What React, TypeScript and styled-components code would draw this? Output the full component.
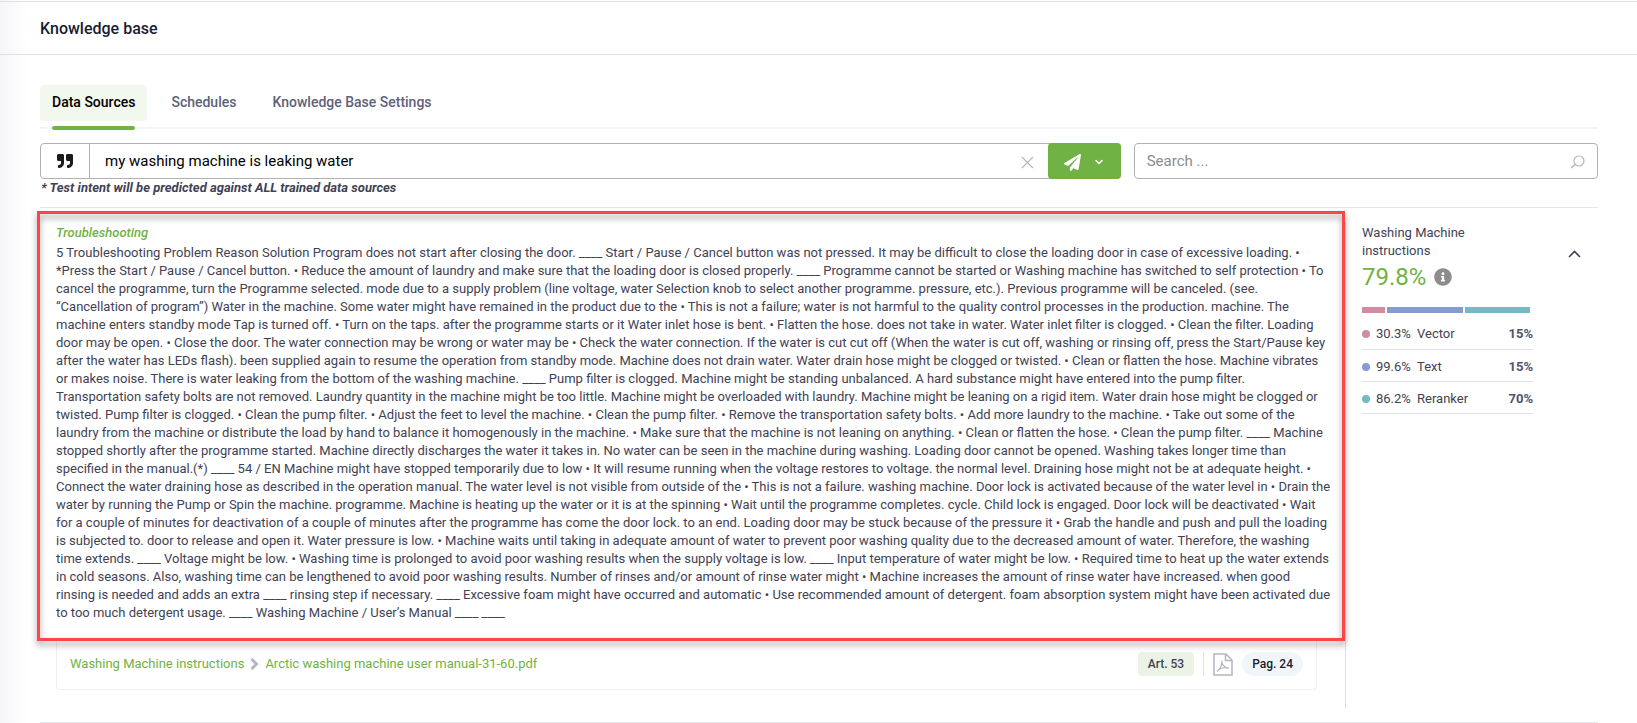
import React from "react";
import styled, { createGlobalStyle, css } from "styled-components";
import { FaQuoteRight, FaPaperPlane, FaInfoCircle } from "react-icons/fa";
import { FiChevronDown } from "react-icons/fi";

const Global = createGlobalStyle`
  *, *::before, *::after { box-sizing: border-box; }
  body {
    margin: 0;
    background: #fff;
    color: #3f4254;
    font: 400 13px/18px Roboto, "Liberation Sans", sans-serif;
  }
  button, input { font: inherit; color: inherit; }
  h1, h2, p, ul { margin: 0; padding: 0; }
`;

const Page = styled.div`
  min-height: 100vh;
  padding-top: 1px;
  background: linear-gradient(to right, #f6f6f9, #fff 28px);
`;

const Header = styled.header`
  display: flex;
  align-items: center;
  height: 54px;
  padding: 2px 40px 0;
  border-top: 1px solid #dde1ea;
  border-bottom: 1px solid #dde1ea;
`;

const Title = styled.h1`
  font-size: 16px;
  line-height: 24px;
  font-weight: 500;
  color: #181c32;
`;

const Main = styled.main`
  padding: 30px 39px 0 40px;
`;

const Tabs = styled.nav`
  display: flex;
  gap: 12px;
  margin-bottom: 14px;
  padding-bottom: 6px;
  border-bottom: 2px solid #f4f4f4;
`;

const Tab = styled.a<{ $active?: boolean }>`
  position: relative;
  padding: 7px 12px 9px;
  border-radius: 4px;
  font-size: 14px;
  line-height: 20px;
  font-weight: 500;
  color: #5e6278;
  text-decoration: none;
  ${(p) =>
    p.$active &&
    css`
      color: #000;
      background: #f3f8ef;
      &::after {
        content: "";
        position: absolute;
        left: 12px;
        right: 12px;
        bottom: -9px;
        height: 4px;
        border-radius: 2px;
        background: #70b244;
      }
    `}
`;

const Toolbar = styled.div`
  display: flex;
  gap: 13px;
`;

const Field = styled.div<{ $grow: number }>`
  display: flex;
  flex: ${(p) => p.$grow} 1 0;
  height: 36px;
  border: 1px solid #b1b1b1;
  border-radius: 4px;
`;

const QuoteLabel = styled.label`
  display: flex;
  align-items: center;
  justify-content: center;
  width: 49px;
  border-right: 1px solid #b1b1b1;
  color: #1c1c1c;
`;

const TextInput = styled.input`
  flex: 1;
  min-width: 0;
  padding: 0 12px;
  border: 0;
  outline: 0;
  background: none;
  font-size: 15px;
  &::placeholder {
    color: #8c8c8c;
    opacity: 1;
  }
`;

const QueryInput = styled(TextInput)`
  padding: 0 15px;
  color: #000;
`;

const IconButton = styled.button`
  display: flex;
  align-items: center;
  padding: 2px 12px 0;
  border: 0;
  background: none;
  color: #b5b5c3;
  cursor: pointer;
`;

const ClearButton = styled(IconButton)`
  padding: 2px 15px 0;
`;

const SendButton = styled(IconButton)`
  gap: 12px;
  width: 73px;
  margin: -1px;
  padding: 2px 16px 0;
  border-radius: 4px;
  background: #70b244;
  color: #fff;
`;

const Hint = styled.p`
  padding: 0 0 10px 1px;
  border-bottom: 1px solid #e4e6ef;
  font-weight: 700;
  font-style: italic;
`;

const Result = styled.section`
  display: flex;
  padding: 14px 0;
  border-bottom: 1px solid #e4e6ef;
`;

const Passage = styled.div`
  flex: 1;
  min-width: 0;
  padding: 2px 0 18px 16px;
  border-right: 1px solid #dddde8;
`;

const Excerpt = styled.div`
  position: relative;
  padding: 0 13px 19px 0;
`;

const Highlight = styled.div`
  position: absolute;
  inset: -13px 0 0 -19px;
  border: 3px solid #fd4646;
  filter: drop-shadow(0 4px 3px rgba(0, 0, 0, 0.4));
  pointer-events: none;
`;

const Topic = styled.h2`
  margin-bottom: 2px;
  font-size: 13px;
  line-height: 18px;
  font-weight: 500;
  font-style: italic;
  color: #70b244;
`;

const SourceCard = styled.div`
  display: flex;
  align-items: center;
  gap: 9px;
  margin-right: 28px;
  padding: 11px 13px 13px;
  border: 1px solid #efefef;
  border-top: 0;
  border-radius: 0 0 4px 4px;
`;

const Crumbs = styled.div`
  display: flex;
  flex: 1;
  align-items: center;
  gap: 6px;
  color: #b5b5c3;
`;

const Crumb = styled.a`
  color: #70b244;
  text-decoration: none;
`;

const Badge = styled.span<{ $pill?: boolean }>`
  padding: 3px 10px;
  border-radius: ${(p) => (p.$pill ? 12 : 4)}px;
  background: ${(p) => (p.$pill ? "#f3f6f9" : "#ebf3e6")};
  color: ${(p) => (p.$pill ? "#181c32" : "#3f4254")};
  font-size: 12px;
  font-weight: 500;
`;

const Divider = styled.span`
  align-self: stretch;
  width: 1px;
  background: #dde1ea;
`;

const Scores = styled.aside`
  display: flex;
  align-items: flex-start;
  width: 252px;
  padding: 2px 0 0 16px;
`;

const ScoreBody = styled.div`
  flex: 0 0 171px;
`;

const ScoreLine = styled.div`
  display: flex;
  align-items: center;
  gap: 8px;
  margin: 1px 0 14px;
  color: #8c8c8c;
`;

const Total = styled.strong`
  font-size: 24px;
  line-height: 32px;
  font-weight: 400;
  color: #70b244;
`;

const Stack = styled.div`
  display: flex;
  gap: 2px;
  height: 6px;
  margin: 0 3px 4px 0;
`;

const Segment = styled.span<{ $color: string; $share: number }>`
  flex: ${(p) => p.$share} 1 0;
  background: ${(p) => p.$color};
`;

const ScoreTable = styled.table`
  width: 100%;
  border-collapse: collapse;
  td {
    height: 32px;
    padding: 3px 0 0;
    border-bottom: 1px solid #dde1ea;
  }
  td:first-child {
    width: 55px;
  }
  td:last-child {
    text-align: right;
    font-weight: 700;
    color: #50546f;
  }
`;

const Dot = styled.i<{ $color: string }>`
  display: inline-block;
  width: 8px;
  height: 8px;
  margin-right: 6px;
  border-radius: 50%;
  background: ${(p) => p.$color};
`;

const Toggle = styled(IconButton)`
  margin: 24px 17px 0 auto;
  padding: 2px 0 0;
  color: #3f4254;
`;

const scores = [
  { name: "Vector", value: 30.3, weight: 15, color: "#cf8d9e" },
  { name: "Text", value: 99.6, weight: 15, color: "#869bcf" },
  { name: "Reranker", value: 86.2, weight: 70, color: "#74b9c6" },
];

const excerpt =
  "5 Troubleshooting Problem Reason Solution Program does not start after closing the door. ____ Start / Pause / Cancel button was not pressed. It may be difficult to close the loading door in case of excessive loading. • *Press the Start / Pause / Cancel button. • Reduce the amount of laundry and make sure that the loading door is closed properly. ____ Programme cannot be started or Washing machine has switched to self protection • To cancel the programme, turn the Programme selected. mode due to a supply problem (line voltage, water Selection knob to select another programme. pressure, etc.). Previous programme will be canceled. (see. “Cancellation of program”) Water in the machine. Some water might have remained in the product due to the • This is not a failure; water is not harmful to the quality control processes in the production. machine. The machine enters standby mode Tap is turned off. • Turn on the taps. after the programme starts or it Water inlet hose is bent. • Flatten the hose. does not take in water. Water inlet filter is clogged. • Clean the filter. Loading door may be open. • Close the door. The water connection may be wrong or water may be • Check the water connection. If the water is cut cut off (When the water is cut off, washing or rinsing off, press the Start/Pause key after the water has LEDs flash). been supplied again to resume the operation from standby mode. Machine does not drain water. Water drain hose might be clogged or twisted. • Clean or flatten the hose. Machine vibrates or makes noise. There is water leaking from the bottom of the washing machine. ____ Pump filter is clogged. Machine might be standing unbalanced. A hard substance might have entered into the pump filter. Transportation safety bolts are not removed. Laundry quantity in the machine might be too little. Machine might be overloaded with laundry. Machine might be leaning on a rigid item. Water drain hose might be clogged or twisted. Pump filter is clogged. • Clean the pump filter. • Adjust the feet to level the machine. • Clean the pump filter. • Remove the transportation safety bolts. • Add more laundry to the machine. • Take out some of the laundry from the machine or distribute the load by hand to balance it homogenously in the machine. • Make sure that the machine is not leaning on anything. • Clean or flatten the hose. • Clean the pump filter. ____ Machine stopped shortly after the programme started. Machine directly discharges the water it takes in. No water can be seen in the machine during washing. Loading door cannot be opened. Washing takes longer time than specified in the manual.(*) ____ 54 / EN Machine might have stopped temporarily due to low • It will resume running when the voltage restores to voltage. the normal level. Draining hose might not be at adequate height. • Connect the water draining hose as described in the operation manual. The water level is not visible from outside of the • This is not a failure. washing machine. Door lock is activated because of the water level in • Drain the water by running the Pump or Spin the machine. programme. Machine is heating up the water or it is at the spinning • Wait until the programme completes. cycle. Child lock is engaged. Door lock will be deactivated • Wait for a couple of minutes for deactivation of a couple of minutes after the programme has come the door lock. to an end. Loading door may be stuck because of the pressure it • Grab the handle and push and pull the loading is subjected to. door to release and open it. Water pressure is low. • Machine waits until taking in adequate amount of water to prevent poor washing quality due to the decreased amount of water. Therefore, the washing time extends. ____ Voltage might be low. • Washing time is prolonged to avoid poor washing results when the supply voltage is low. ____ Input temperature of water might be low. • Required time to heat up the water extends in cold seasons. Also, washing time can be lengthened to avoid poor washing results. Number of rinses and/or amount of rinse water might • Machine increases the amount of rinse water have increased. when good rinsing is needed and adds an extra ____ rinsing step if necessary. ____ Excessive foam might have occurred and automatic • Use recommended amount of detergent. foam absorption system might have been activated due to too much detergent usage. ____ Washing Machine / User’s Manual ____ ____";

const CloseIcon = () => (
  <svg width="13" height="13" viewBox="0 0 13 13" fill="none" stroke="currentColor" strokeWidth="1.2">
    <path d="M1 1L12 12M12 1L1 12" />
  </svg>
);

const SearchIcon = () => (
  <svg width="15" height="14" viewBox="0 0 15 14" fill="none" stroke="currentColor">
    <circle cx="9" cy="6" r="5" strokeWidth="1.2" />
    <path d="M5 9.5L1 13" strokeWidth="1.6" />
  </svg>
);

const CrumbIcon = () => (
  <svg width="9" height="12" viewBox="0 0 9 12" fill="none" stroke="currentColor" strokeWidth="3">
    <path d="M1.500 1L6.500 6L1.500 11" />
  </svg>
);

const PdfIcon = () => (
  <svg width="20" height="23" viewBox="0 0 20 23" fill="none" stroke="#b5b5c3" strokeWidth="1.5">
    <path d="M1 1H13L19 7V22H1Z" />
    <path d="M12.5 1V7.5H19" />
    <path
      d="M4 18.500C6.500 17 9.500 11.500 9 7.500C8.300 9.500 10 14.500 16 15.200C12.500 14.200 8.500 15 6 16.200"
      strokeWidth="1.2"
    />
  </svg>
);

const ChevronUpIcon = () => (
  <svg width="13" height="8" viewBox="0 0 13 8" fill="none" stroke="currentColor" strokeWidth="1.6">
    <path d="M1 7L6.500 1.500L12 7" />
  </svg>
);

export default function App() {
  return (
    <Page>
      <Global />
      <Header>
        <Title>Knowledge base</Title>
      </Header>
      <Main>
        <Tabs>
          <Tab href="#sources" $active>Data Sources</Tab>
          <Tab href="#schedules">Schedules</Tab>
          <Tab href="#settings">Knowledge Base Settings</Tab>
        </Tabs>
        <Toolbar>
          <Field $grow={7}>
            <QuoteLabel htmlFor="intent" aria-label="Test intent">
              <FaQuoteRight size={16} />
            </QuoteLabel>
            <QueryInput id="intent" defaultValue="my washing machine is leaking water" />
            <ClearButton aria-label="Clear"><CloseIcon /></ClearButton>
            <SendButton aria-label="Send">
              <FaPaperPlane size={17} />
              <FiChevronDown size={12} strokeWidth={3} />
            </SendButton>
          </Field>
          <Field $grow={3}>
            <TextInput aria-label="Search" placeholder="Search ..." />
            <IconButton aria-label="Run search"><SearchIcon /></IconButton>
          </Field>
        </Toolbar>
        <Hint>* Test intent will be predicted against ALL trained data sources</Hint>
        <Result>
          <Passage>
            <Excerpt>
              <Topic>Troubleshooting</Topic>
              <p>{excerpt}</p>
              <Highlight />
            </Excerpt>
            <SourceCard>
              <Crumbs>
                <Crumb href="#instructions">Washing Machine instructions</Crumb>
                <CrumbIcon />
                <Crumb href="#manual">Arctic washing machine user manual-31-60.pdf</Crumb>
              </Crumbs>
              <Badge>Art. 53</Badge>
              <Divider />
              <PdfIcon />
              <Badge $pill>Pag. 24</Badge>
            </SourceCard>
          </Passage>
          <Scores>
            <ScoreBody>
              <p>Washing Machine<br />instructions</p>
              <ScoreLine>
                <Total>79.8%</Total>
                <FaInfoCircle size={18} />
              </ScoreLine>
              <Stack>
                {scores.map((s) => (
                  <Segment key={s.name} $color={s.color} $share={s.value} />
                ))}
              </Stack>
              <ScoreTable>
                <tbody>
                  {scores.map((s) => (
                    <tr key={s.name}>
                      <td><Dot $color={s.color} />{s.value}%</td>
                      <td>{s.name}</td>
                      <td>{s.weight}%</td>
                    </tr>
                  ))}
                </tbody>
              </ScoreTable>
            </ScoreBody>
            <Toggle aria-label="Collapse"><ChevronUpIcon /></Toggle>
          </Scores>
        </Result>
      </Main>
    </Page>
  );
}
